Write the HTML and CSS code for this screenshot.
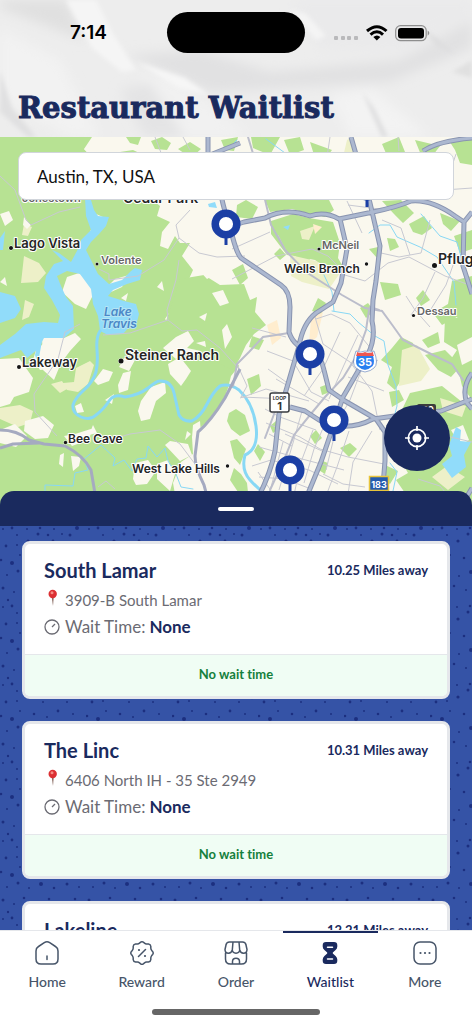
FILE: index.html
```html
<!DOCTYPE html>
<html lang="en">
<head>
    <meta charset="UTF-8">
    <meta name="viewport" content="width=device-width, initial-scale=1.0">
    <title>Restaurant Waitlist</title>
    <link rel="stylesheet" href="styles.css">
</head>
<body>
    <div class="app">
        <header class="header">
            <svg class="paper" viewBox="0 0 472 137" preserveAspectRatio="none" aria-hidden="true">
                <defs>
                    <filter id="soft" x="-20%" y="-20%" width="140%" height="140%"><feGaussianBlur stdDeviation="6"/></filter>
                    <filter id="crease" x="-20%" y="-20%" width="140%" height="140%"><feGaussianBlur stdDeviation="2"/></filter>
                </defs>
                <rect width="472" height="137" fill="#ededed"/>
                <g filter="url(#soft)">
                    <path d="M0 0H66L84 40L0 8Z" fill="#e0e0e0"/>
                    <path d="M125 55L200 50L270 72L400 60L472 20V48L390 82L210 92Z" fill="#e1e1e2"/>
                    <path d="M0 28L60 60L100 137H70L0 100Z" fill="#f2f2f2"/>
                    <path d="M140 70L180 82L250 137H150Z" fill="#f1f1f1"/>
                    <path d="M290 0H472V16L400 52L320 50Z" fill="#eaeaeb"/>
                    <path d="M330 95L372 88L430 137H350Z" fill="#f3f3f3"/>
                    <path d="M120 90L150 82L185 137H145Z" fill="#e4e4e5"/>
                </g>
                <g filter="url(#crease)">
                    <path d="M66 0H96L112 32L136 70L122 72L92 48Z" fill="#f5f5f5"/>
                    <path d="M290 10L306 14L326 36L316 40Z" fill="#f4f4f4"/>
                    <path d="M136 62L185 78L210 96L178 88Z" fill="#f6f6f6"/>
                    <path d="M425 30L440 40L455 54L436 46Z" fill="#dededf"/>
                    <path d="M0 70L12 108L36 137H28L0 112Z" fill="#e0e0e1"/>
                    <path d="M362 92L374 108L388 137H382Z" fill="#dededf"/>
                    <path d="M452 72L472 60V78Z" fill="#e0e0e0"/>
                </g>
            </svg>
            <div class="status">
                <span class="time">7:14</span>
                <span class="island"></span>
                <svg class="signals" viewBox="0 0 96 20" aria-hidden="true">
                    <g fill="#b9b9bb"><rect y="13" width="4" height="4" rx="1"/><rect x="7" y="13" width="4" height="4" rx="1"/><rect x="13" y="13" width="4" height="4" rx="1"/><rect x="20" y="13" width="4" height="4" rx="1"/></g>
                    <g fill="none" stroke="#000" stroke-width="3"><path d="M33 8Q43 -.6 52.500 8"/><path d="M36.500 11.600Q43 6 49 11.600"/></g>
                    <path d="M39.300 14Q43 11 46.400 14L42.800 17.500Z"/>
                    <rect x="61.700" y="2.700" width="30.500" height="15" rx="4.800" fill="none" stroke="#8e8e8e" stroke-width="1.200"/>
                    <rect x="64" y="5" width="26" height="10.500" rx="3"/>
                    <path d="M93.700 7.500Q97 10 93.700 12.800Z" fill="#8e8e8e"/>
                </svg>
            </div>
            <h1>Restaurant Waitlist</h1>
        </header>

        <section class="map">
            <svg class="map-canvas" viewBox="0 137 472 374" preserveAspectRatio="xMidYMin slice" role="img" aria-label="Map of Austin">
                <rect y="137" width="472" height="374" fill="#faf8ee"/>
                <!-- parks and hills -->
                <g fill="#b7e293">
                    <path d="M0 137H92L84 149L94 158L120 152L133 150L150 158L158 180L150 198L160 206L157 216L170 222L162 232L160 246L168 249L175 236L180 243L190 243L182 256L193 270L184 290L171 310L165 319L172 327L186 321L196 326L214 335L226 340L240 343L235 358L239 366L231 376L228 388L222 404L214 416L200 428L192 437L193 454L181 462L173 483L178 511H0Z"/>
                    <path d="M180 279L204 275L220 285L244 284L250 300L257 297L255 312L266 325L254 334L246 345L240 358L233 370L218 363L205 348L180 337L166 321Z"/>
                    <path d="M126 137H141L138 145L130 143ZM151 141L162 137L171 143L167 150L155 149ZM178 149L190 142L201 149L191 158ZM221 140L238 137L234 151L225 150ZM251 137H280L270 155L253 148ZM284 140L300 137L304 150L290 155ZM310 142L332 150L326 158H315ZM382 144L399 137L405 152L388 158ZM415 140L440 146L430 159L421 155ZM448 139H472V165L460 163L455 150Z"/>
                    <path d="M237 205L246 200L258 207L252 219L236 217ZM265 200H329L334 210L325 217L310 214L292 209L270 212ZM271 221L293 214L309 218L333 222L340 243L338 258L345 270L335 275L315 260L287 255L271 234Z"/>
                    <path d="M382 201L401 200L414 213L403 223L394 214ZM409 224L424 216L432 228L422 235L413 232ZM440 213L460 221L451 231L443 224ZM454 236L472 230V249L460 253ZM452 281L472 276V325L464 332L457 317L442 325L433 313L448 304Z"/>
                    <path d="M401 337L413 343L416 359L406 372L395 390L387 383L392 367L381 360L392 348ZM425 355L445 350L461 366L451 377L438 370ZM389 392L399 390L404 400L392 407ZM422 340L438 332L440 343L428 348ZM445 318H472V400L462 386L459 373L449 362L457 350L444 342Z"/>
                    <path d="M410 393L442 386L472 410V511H402L405 493L396 480L408 473L400 459L394 448L397 420ZM385 465L398 471L390 484L382 479Z"/>
                    <path d="M232 270L243 264L248 278L240 285ZM295 255L302 250L311 261L303 270ZM380 282L398 284L401 295L385 300ZM360 308L368 303L374 311L366 318ZM318 298L326 303L321 314L312 311ZM416 298L423 290L430 300L421 306ZM274 254L280 248L286 255L280 260ZM369 249L378 247L377 258ZM387 238L395 239L399 247L390 251Z"/>
                    <path d="M229 413L236 409L245 415L250 431L240 436L231 429L227 421ZM230 441L237 439L246 449L240 465L234 458ZM234 468L241 474L247 483L250 511H240L238 492L230 480ZM252 336L264 340L259 350L249 347ZM247 379L259 374L261 386L251 395ZM254 451L258 444L265 452L260 461ZM320 387L328 384L330 392L322 395ZM310 436L316 430L322 438L315 444ZM340 448L350 443L357 449L349 457ZM320 460L328 463L325 474L317 469ZM270 426L276 421L280 428L273 433Z"/>
                </g>
                <g fill="#edf0c8">
                    <path d="M24 224L32 227L28 236L22 235ZM24 256L39 263L46 273L38 282L21 283ZM25 300L34 304L29 317L22 320ZM63 383L74 382L76 368L90 361L94 365L88 384L78 392L67 390ZM51 384L62 381L67 389L60 393ZM0 408L20 405L33 411L30 423L18 427L0 419Z"/>
                    <path d="M290 255L316 261L340 273L329 289L302 282L291 276ZM402 350L417 345L430 369L421 381L399 386ZM440 398L466 406L462 417L443 411ZM300 231L315 226L309 240L302 239ZM347 140L352 137L354 157L343 157ZM447 466L465 477L448 490L432 477Z"/>
                </g>
                <g fill="#ffedce"><path d="M311 318L323 312L317 337L309 344ZM267 325L277 320L281 338L272 345ZM313 224L322 227L315 234Z"/></g>
                <!-- clearings -->
                <g fill="#faf8ee">
                    <path d="M84 149L94 147L100 155L110 148L119 153L108 160L91 157ZM0 214L9 211L13 220L5 226ZM23 225L24 217L31 225L27 229ZM90 232L94 222L98 228L94 233ZM96 214L103 217L104 223L98 222ZM62 292L67 277L79 273L90 282L93 295L86 309L75 304ZM108 286L115 279L129 275L122 287L111 292ZM0 282L5 277L7 286ZM157 287L162 281L164 291ZM121 298L128 293L126 301ZM32 363L36 350L50 338L62 340L63 355L52 369L40 370L32 358ZM0 359L19 358L33 378L29 392L14 397L10 404L0 407Z"/>
                    <path d="M42 335L54 329L64 338L75 333L81 339L70 351L61 363L54 380L43 370ZM94 381L103 369L113 372L109 381L98 385ZM118 385L123 373L131 371L128 390L119 393ZM119 367L124 358L135 360L129 371ZM141 401L151 387L165 382L166 393L156 401L150 419L141 421L138 411ZM168 364L180 357L191 371L186 379L181 386L170 374ZM176 337L188 331L194 341L187 348L201 351L195 356L185 352L176 359L163 348ZM222 330L227 324L232 337L225 349ZM196 343L205 341L206 347Z"/>
                    <path d="M0 430L15 424L27 436L16 447L0 443ZM25 421L43 416L54 425L48 438L35 439L24 431ZM64 436L75 434L94 428L88 440L72 446ZM89 435L93 425L97 433ZM71 456L81 457L79 466L73 471ZM60 455L64 453L63 467L59 464ZM133 479L135 463L148 460L156 471L147 484L136 485ZM165 445L170 441L188 444L192 455L180 461ZM185 440L187 431L191 434ZM157 464L168 460L175 474L170 491L157 479ZM193 425L200 421L201 434L192 438ZM75 406L81 403L84 412L77 413ZM105 400L114 394L112 404Z"/>
                    <path d="M197 268L211 265L216 274L207 279ZM457 345L472 337V360L462 365ZM451 430L463 425L469 440L460 446ZM199 317L207 313L205 321ZM212 293L223 290L229 303L220 306Z"/>
                </g>
                <!-- water -->
                <g fill="#91dcfa">
                    <path d="M85 198L91 200L94 210L98 216L109 217L106 226L99 234L91 242L86 250L92 262L98 274L109 284L122 280L131 271L135 268L142 270L140 280L127 284L113 290L108 296L124 301L136 304L139 314L137 322L129 327L123 334L108 335L100 331L98 316L93 304L91 289L80 274L67 271L57 276L61 286L66 297L73 306L74 329L64 338L44 338L38 349L27 358L21 350L0 358V345L15 334L26 324L44 322L58 323L60 315L52 300L44 288L46 276L54 264L63 261L52 250L59 253L71 262L78 249L81 240L91 230L86 216ZM0 292L15 296L21 309L15 318L0 323ZM0 238L5 231L3 250L0 250ZM208 204L215 202L217 208L209 207ZM283 227L290 225L288 230ZM449 445L456 427L461 430L460 441L471 442L464 455L466 467L452 478L442 464L452 456Z"/>
                    <path d="M38 342L42 341L38 363L35 355Z"/>
                </g>
                <g fill="none" stroke="#88d8f5" stroke-linecap="round" stroke-linejoin="round">
                    <path stroke-width="3" d="M100 331Q96 337 97 350T96 372Q93 382 84 390T73 405Q72 413 81 417T96 415Q104 409 109 401T125 397Q139 395 148 388T159 381Q171 380 174 393T179 415Q183 422 192 421Q201 416 207 404T220 386Q229 383 239 390Q253 403 256 426T245 455Q241 470 250 480T270 498"/>
                    <path stroke-width="1" d="M45 491V485L73 486L75 473L88 470L84 459L101 445L115 458L113 466L124 460L132 471L137 459L146 458L148 446L157 457L165 448L168 461L176 474L181 487L193 489M421 214L440 236L457 242L464 268M369 233L380 225L390 225L397 237L420 247L437 257L454 282L456 305M332 311L350 314L358 322L375 336L384 341L388 365L396 386L397 406L390 432M390 463L397 472L393 491M324 275L332 292L334 311M266 139L285 153M237 140L232 145"/>
                </g>
                <!-- streets -->
                <g fill="none" stroke="#c8c9d2" stroke-width="1">
                    <path d="M0 176L15 190L26 220L31 225L59 212L80 207M99 269L109 274V280L138 276L164 260L179 238L199 253L217 257L245 256M179 238L176 225L190 210M179 260L176 280L167 310L168 320L130 333L103 335M80 324L65 332L58 359L34 394L35 412L57 436M168 320L182 331L197 330L220 348L240 370M103 442L130 434L160 430L180 444L195 464M98 487L106 481L115 489M155 137L163 158M183 137L190 150"/>
                    <path d="M232 279L276 256L312 249L328 256L339 267M232 249L270 232M278 235L287 253M338 273L365 281L388 263L409 257L445 276L472 286M381 253L399 257L421 253L430 220M382 220L401 228L410 255M348 205L387 210M411 315L423 298L435 272M406 296L415 310L430 327M347 201L362 233M457 254L446 285L431 309M267 351L293 361L311 392L329 401M237 364L247 386L241 397L289 399M315 317L323 344L350 362L372 391L380 430M316 319L331 314L350 323L372 350M268 369L286 382M276 379L319 404M340 332L323 369L304 396M358 335L344 365L329 399M378 360L361 371L350 400L338 421L326 470M252 328L286 337M348 377L384 391"/>
                    <path d="M252 466L271 460L309 470L338 484M266 423L300 437L320 449L348 457L384 464M259 447L302 459L344 470M259 477L285 479L311 489M265 409L280 417L316 430M302 411L293 443L279 490M313 430L301 462L294 495M349 431L337 467L326 496M372 431L353 462L348 494M240 398L266 389L309 401M420 410L442 435L472 442M418 479L440 486L461 511M283 442L270 491M327 419L314 449L304 483M285 434L322 451M269 434L292 446M323 474L343 484L365 487M258 472L274 495M330 137L327 157M398 137L399 151M456 154L444 190L472 188"/>
                </g>
                <g fill="none" stroke="#bbbdcb" stroke-width="2" stroke-linecap="round">
                    <path d="M248 137L258 170L271 225L285 250L306 272L342 295L365 308L382 311L393 326L403 340L433 355L452 364L463 380M379 310L370 307M369 310L366 330L357 355L343 378L325 397L310 415L294 435L284 460L270 490M289 333L263 337L249 352L237 364L233 386M289 406L276 409L265 438"/>
                </g>
                <g fill="none" stroke="#a5aac0" stroke-width="3" stroke-linejoin="round">
                    <path d="M0 430Q17 430 29 440L44 444L65 446Q83 455 91 470L98 511M0 448L13 444L39 443M240 369L225 398Q211 421 198 432L195 456Q195 467 204 485L211 511"/>
                </g>
                <g fill="none" stroke="#8994b0" stroke-width="5" stroke-linejoin="round">
                    <path d="M208 137V160M221 195Q224 210 232 235Q237 254 241 258L281 285Q290 291 290 307L289 332Q294 348 312 351Q321 356 324 370L329 390L345 401L376 419L385 432V461L381 511M226 228L244 222L265 218Q285 207 310 216Q325 211 339 219L373 212Q397 207 411 201Q431 199 455 216L464 222L472 212M464 222L463 266L472 294M351 137L370 203L380 246L376 281L373 300L372 321Q376 338 368 354L343 397L334 424L321 462L307 496M340 219L347 249L341 283L333 302L316 313Q303 323 299 346L285 394L279 414L275 451Q271 472 258 498M472 399L441 411L402 415L373 419Q346 433 319 420L305 411L290 407M472 373Q461 388 467 403L472 409M205 157L240 143M423 151Q438 141 472 138M458 511L472 488"/>
                </g>
                <g fill="none" stroke="#acb8d0" stroke-width="3" stroke-linejoin="round">
                    <path d="M208 137V160M221 195Q224 210 232 235Q237 254 241 258L281 285Q290 291 290 307L289 332Q294 348 312 351Q321 356 324 370L329 390L345 401L376 419L385 432V461L381 511M226 228L244 222L265 218Q285 207 310 216Q325 211 339 219L373 212Q397 207 411 201Q431 199 455 216L464 222L472 212M464 222L463 266L472 294M351 137L370 203L380 246L376 281L373 300L372 321Q376 338 368 354L343 397L334 424L321 462L307 496M340 219L347 249L341 283L333 302L316 313Q303 323 299 346L285 394L279 414L275 451Q271 472 258 498M472 399L441 411L402 415L373 419Q346 433 319 420L305 411L290 407M472 373Q461 388 467 403L472 409M205 157L240 143M423 151Q438 141 472 138M458 511L472 488"/>
                </g>
                <!-- place names -->
                <g class="towns">
                    <text class="muted" x="22" y="202">Jonestown</text>
                    <text x="123" y="203" class="town-lg">Cedar Park</text>
                    <text x="14" y="248" class="town">Lago Vista</text>
                    <text class="muted" x="101" y="264">Volente</text>
                    <text class="water" x="104" y="316">Lake</text>
                    <text class="water" x="101" y="328">Travis</text>
                    <text x="22" y="367" class="town">Lakeway</text>
                    <text x="125" y="360" class="town-lg">Steiner Ranch</text>
                    <text x="68" y="443">Bee Cave</text>
                    <text x="132" y="473">West Lake Hills</text>
                    <text class="muted" x="322" y="249">McNeil</text>
                    <text x="284" y="273">Wells Branch</text>
                    <text x="438" y="264" class="town-lg">Pflugerville</text>
                    <text class="muted" x="417" y="315">Dessau</text>
                </g>
                <g fill="#151515" stroke="#fff" stroke-width="1" paint-order="stroke">
                    <circle cx="11" cy="248" r="2"/><circle cx="97" cy="264" r="1.500"/><circle cx="19" cy="367" r="2"/><circle cx="121" cy="361" r="2.500"/><circle cx="65.500" cy="442.500" r="1.700"/><circle cx="227.500" cy="466" r="1.700"/><circle cx="319" cy="249" r="1.600"/><circle cx="366.500" cy="264" r="1.700"/><circle cx="434.500" cy="265.500" r="2.500"/><circle cx="413.500" cy="315.500" r="1.600"/>
                </g>
                <!-- road shields -->
                <g class="shield">
                    <rect x="270" y="393" width="19" height="19" rx="2" fill="#fff" stroke="#393b40" stroke-width="1.500"/>
                    <text x="279.500" y="400" class="loop">LOOP</text>
                    <text x="279.500" y="410" fill="#333">1</text>
                    <path d="M357 352H373Q377 364 373 367Q370 370 365 371Q360 370 357 367Q353 364 357 352Z" fill="#287ff0" stroke="#fff" stroke-width="2"/>
                    <path d="M356 356Q357 354 357 352Q361 354 365 352Q369 354 373 352Q373 354 374 356Z" fill="#ed5651"/>
                    <path d="M356 351Q361 353 365 351Q369 353 374 351Q379 364 374 368Q371 371 365 372Q359 371 356 368Q351 364 356 351Z" fill="none" stroke="#5878b8" stroke-width=".6"/>
                    <text x="365" y="366" fill="#fff">35</text>
                    <rect x="369.500" y="476.500" width="19" height="14" fill="#245bae" stroke="#e8c43b" stroke-width="1.500"/>
                    <text x="379" y="487.500" fill="#fff" class="us">183</text>
                    <rect x="417" y="404" width="19" height="16" rx="2" fill="#3b3d3d"/>
                    <text x="426" y="413" fill="#fff" class="us">130</text>
                </g>
                <!-- restaurants -->
                <defs>
                    <g id="pin"><path d="M-1.500 8H1.500V21H-1.500Z" fill="#1b3fa5"/><circle r="10.800" fill="#fff" stroke="#1b3fa5" stroke-width="7.500"/></g>
                </defs>
                <use href="#pin" x="367" y="186"/>
                <use href="#pin" x="226" y="224"/>
                <use href="#pin" x="310" y="354"/>
                <use href="#pin" x="334" y="420"/>
                <use href="#pin" x="290" y="470"/>
            </svg>
            <input class="search" type="text" value="Austin, TX, USA" aria-label="Search location">
            <button class="locate" type="button" aria-label="Use my location">
                <svg viewBox="0 0 24 24" aria-hidden="true"><g fill="none" stroke="#fff" stroke-width="1.700"><circle cx="12" cy="12" r="8.700"/><path d="M12 0V5M12 19V24M0 12H5M19 12H24"/></g><circle cx="12" cy="12" r="4.500" fill="#fff"/></svg>
            </button>
        </section>

        <main class="sheet">
            <div class="sheet-head"><span class="handle"></span></div>
            <div class="list">
                <article class="card">
                    <div class="card-body">
                        <div class="card-top"><h2>South Lamar</h2><span class="distance">10.25 Miles away</span></div>
                        <p class="address"><svg viewBox="0 0 16 18" aria-hidden="true"><path d="M7.600 7H9.800L9 17Z" fill="#87685f"/><circle cx="8.700" cy="5" r="4.200" fill="#dc3033"/><circle cx="8" cy="3.800" r="1.500" fill="#f58b82"/></svg>3909-B South Lamar</p>
                        <p class="wait"><svg viewBox="0 0 16 16" aria-hidden="true"><circle cx="8" cy="8" r="7"/><path d="M8 8L11 5"/></svg>Wait Time: <strong>None</strong></p>
                    </div>
                    <div class="card-status">No wait time</div>
                </article>
                <article class="card">
                    <div class="card-body">
                        <div class="card-top"><h2>The Linc</h2><span class="distance">10.31 Miles away</span></div>
                        <p class="address"><svg viewBox="0 0 16 18" aria-hidden="true"><path d="M7.600 7H9.800L9 17Z" fill="#87685f"/><circle cx="8.700" cy="5" r="4.200" fill="#dc3033"/><circle cx="8" cy="3.800" r="1.500" fill="#f58b82"/></svg>6406 North IH - 35 Ste 2949</p>
                        <p class="wait"><svg viewBox="0 0 16 16" aria-hidden="true"><circle cx="8" cy="8" r="7"/><path d="M8 8L11 5"/></svg>Wait Time: <strong>None</strong></p>
                    </div>
                    <div class="card-status">No wait time</div>
                </article>
                <article class="card">
                    <div class="card-body">
                        <div class="card-top"><h2>Lakeline</h2><span class="distance">12.21 Miles away</span></div>
                    </div>
                </article>
            </div>
        </main>

        <nav class="tabs">
            <a href="#home"><svg viewBox="0 0 24 24" aria-hidden="true"><path d="M1 10Q1 7 3.500 5.500L9.300 1.700Q12 0 14.700 1.700L20.500 5.500Q23 7 23 10V18Q23 23 18 23H6Q1 23 1 18ZM12 15V18.500"/></svg>Home</a>
            <a href="#reward"><svg viewBox="0 0 24 24" aria-hidden="true"><path d="M9.500 2.200L10.700 1.200Q12 .3 13.300 1.200L14.500 2.200Q15.500 3 16.800 2.900H18.500Q20.600 3.200 20.800 5.200V6.900Q20.800 8.200 21.700 9.400L22.700 10.600Q23.700 12 22.700 13.400L21.700 14.600Q20.800 15.800 20.800 17.100V18.800Q20.600 20.800 18.500 21.100H16.800Q15.500 21 14.500 21.800L13.300 22.800Q12 23.700 10.700 22.800L9.500 21.800Q8.500 21 7.200 21.100H5.500Q3.400 20.800 3.200 18.800V17.100Q3.200 15.800 2.300 14.600L1.300 13.400Q.3 12 1.300 10.600L2.300 9.400Q3.200 8.200 3.200 6.900V5.200Q3.400 3.200 5.500 2.900H7.200Q8.500 3 9.500 2.200ZM8.500 15.500L15.500 8.500"/><path class="dots" d="M9 9H9.010M15 15H15.010"/></svg>Reward</a>
            <a href="#order"><svg viewBox="0 0 24 24" aria-hidden="true"><path d="M1.500 12V18Q1.500 23 6.500 23H17.500Q22.500 23 22.500 18V12M5.500 1H18.500Q21.500 1 22 4L23 8.500Q23 12 19.500 12.300Q16.500 12 15.700 9Q15.500 12 12 12.300Q8.500 12 8.300 9Q7.500 12 4.500 12.300Q1 12 1 8.500L2 4Q2.500 1 5.500 1ZM8.300 9L9 1M15.700 9L15 1M8.500 23V20.500Q8.500 17.200 12 17.200T15.500 20.500V23"/></svg>Order</a>
            <a class="active" href="#waitlist" aria-current="page"><svg viewBox="0 0 24 24" aria-hidden="true"><path class="solid" d="M8 1H16Q19.300 1 19.300 4.300V5.500Q19.300 7.500 17.600 9L14.800 11.500V12.500L17.600 15Q19.300 16.500 19.300 18.500V19.700Q19.300 23 16 23H8Q4.700 23 4.700 19.700V18.500Q4.700 16.500 6.400 15L9.200 12.500V11.500L6.400 9Q4.700 7.500 4.700 5.500V4.300Q4.700 1 8 1Z"/><path class="cut" d="M9.500 6.300H14.500M9.500 18H14.500"/></svg>Waitlist</a>
            <a href="#more"><svg viewBox="0 0 24 24" aria-hidden="true"><rect x="1" y="1" width="22" height="22" rx="6"/><path class="dots" d="M7.500 12H7.510M12 12H12.010M16.500 12H16.510"/></svg>More</a>
            <span class="home-bar"></span>
        </nav>
    </div>
</body>
</html>
```
FILE: styles.css
```css
* {
    box-sizing: border-box;
}
body {
    margin: 0;
    font-family: Lato, "Open Sans", sans-serif;
    font-variant-ligatures: none;
    color: #1a2a5e;
}
h1, h2, p {
    margin: 0;
}
.app {
    display: flex;
    flex-direction: column;
    height: 100vh;
    overflow: hidden;
    background: #3452a5;
}

/* header */
.header {
    position: relative;
    padding: 12px 18px 12px;
}
.paper {
    position: absolute;
    inset: 0;
    width: 100%;
    height: 100%;
}
.status {
    position: relative;
    display: grid;
    grid-template-columns: 1fr 138px 1fr;
    align-items: center;
    justify-items: center;
}
.time {
    padding-right: 8px;
    font: 600 19px Inter, sans-serif;
    color: #000;
}
.island {
    width: 138px;
    height: 41px;
    border-radius: 21px;
    background: #000;
}
.signals {
    width: 100px;
    height: 20px;
    padding-left: 4px;
}
h1 {
    position: relative;
    margin-top: 38px;
    font: 900 29px/34px "DejaVu Serif", serif;
    color: #1a2a5e;
    -webkit-text-stroke: 1px #1a2a5e;
    white-space: nowrap;
}

/* map */
.map {
    position: relative;
    flex: none;
    height: 374px;
    padding: 15px 18px;
    overflow: hidden;
}
.map-canvas {
    position: absolute;
    inset: 0;
    width: 100%;
    height: 100%;
}
.towns {
    font: 600 12px Inter, sans-serif;
    fill: #252525;
    stroke: #fff;
    stroke-width: 2px;
    stroke-linejoin: round;
    paint-order: stroke;
}
.towns .town {
    font-size: 13px;
}
.towns .town-lg {
    font-size: 14px;
}
.towns .muted {
    font-size: 11px;
    fill: #666;
}
.towns .water {
    font-size: 12px;
    font-style: italic;
    fill: #4b88c7;
    stroke: #b5e5f5;
}
.shield {
    font: 700 11px Inter, sans-serif;
    text-anchor: middle;
}
.shield .us {
    font-size: 9px;
}
.shield .loop {
    font-size: 5px;
    fill: #333;
}
.search {
    position: relative;
    display: block;
    width: 100%;
    height: 48px;
    padding: 0 18px;
    border: 1px solid #d1d5db;
    border-radius: 8px;
    background: #fff;
    font: 400 17px Lato, sans-serif;
    color: #111;
}
.locate {
    position: absolute;
    right: 22px;
    bottom: 40px;
    display: grid;
    place-items: center;
    width: 66px;
    height: 66px;
    padding: 0;
    border: 0;
    border-radius: 50%;
    background: #1a2a5e;
}
.locate svg {
    width: 24px;
    height: 24px;
}

/* bottom sheet */
.sheet {
    position: relative;
    display: flex;
    flex: 1;
    flex-direction: column;
    min-height: 0;
    margin-top: -20px;
}
.sheet-head {
    display: grid;
    flex: none;
    place-items: center;
    height: 35px;
    border-radius: 14px 14px 0 0;
    background: #1a2a5e;
}
.handle {
    width: 36px;
    height: 4px;
    border-radius: 2px;
    background: #fff;
}
.list {
    display: flex;
    flex: 1;
    flex-direction: column;
    gap: 22px;
    min-height: 0;
    padding: 15px 22px;
    overflow-y: auto;
    scrollbar-width: none;
    background: #3553a6 url("data:image/svg+xml,%3Csvg xmlns='http://www.w3.org/2000/svg' width='86' height='78'%3E%3Cg fill='%231c2f80'%3E%3Ccircle cx='3' cy='3' r='1'/%3E%3Ccircle cx='12' cy='2' r='1.4'/%3E%3Ccircle cx='27' cy='3' r='1'/%3E%3Ccircle cx='40' cy='2' r='1.3'/%3E%3Ccircle cx='54' cy='3' r='1'/%3E%3Ccircle cx='77' cy='2' r='2'/%3E%3Ccircle cx='17' cy='9' r='1'/%3E%3Ccircle cx='38' cy='8' r='1.5'/%3E%3Ccircle cx='48' cy='9' r='1.3'/%3E%3Ccircle cx='62' cy='8' r='1'/%3E%3Ccircle cx='70' cy='9' r='1.5'/%3E%3Ccircle cx='6' cy='20' r='1.4'/%3E%3Ccircle cx='17' cy='19' r='1'/%3E%3Ccircle cx='28' cy='15' r='1.6'/%3E%3Ccircle cx='43' cy='20' r='1'/%3E%3Ccircle cx='53' cy='15' r='1.4'/%3E%3Ccircle cx='67' cy='20' r='1'/%3E%3Ccircle cx='80' cy='16' r='1.2'/%3E%3Ccircle cx='1' cy='34' r='1.3'/%3E%3Ccircle cx='12' cy='37' r='2'/%3E%3Ccircle cx='20' cy='29' r='1'/%3E%3Ccircle cx='34' cy='32' r='1.3'/%3E%3Ccircle cx='47' cy='35' r='1'/%3E%3Ccircle cx='58' cy='29' r='1.4'/%3E%3Ccircle cx='73' cy='32' r='1'/%3E%3Ccircle cx='7' cy='49' r='1'/%3E%3Ccircle cx='18' cy='45' r='1.5'/%3E%3Ccircle cx='29' cy='50' r='1'/%3E%3Ccircle cx='41' cy='46' r='2'/%3E%3Ccircle cx='54' cy='50' r='1.3'/%3E%3Ccircle cx='67' cy='46' r='1.5'/%3E%3Ccircle cx='79' cy='49' r='1'/%3E%3Ccircle cx='3' cy='62' r='1.5'/%3E%3Ccircle cx='14' cy='66' r='1'/%3E%3Ccircle cx='24' cy='60' r='1.3'/%3E%3Ccircle cx='36' cy='64' r='1'/%3E%3Ccircle cx='49' cy='61' r='1.3'/%3E%3Ccircle cx='61' cy='66' r='1.7'/%3E%3Ccircle cx='75' cy='61' r='1.3'/%3E%3Ccircle cx='8' cy='74' r='1.2'/%3E%3Ccircle cx='44' cy='75' r='1'/%3E%3Ccircle cx='69' cy='74' r='1.4'/%3E%3C/g%3E%3C/svg%3E");
}
.card {
    flex: none;
    border: 3px solid #e5e7eb;
    border-radius: 8px;
    background: #fff;
    overflow: hidden;
}
.card-body {
    padding: 12px 19px 14px;
}
.card-top {
    display: flex;
    align-items: center;
    justify-content: space-between;
}
h2 {
    font-size: 20px;
    font-weight: 700;
    line-height: 28px;
}
.distance {
    font-size: 13px;
    font-weight: 700;
}
.address,
.wait {
    display: flex;
    align-items: center;
    color: #6b6b73;
}
.address {
    margin-top: 4px;
    font-size: 15px;
    line-height: 24px;
}
.wait {
    margin-top: 2px;
    font-size: 17px;
    line-height: 26px;
}
.wait strong {
    margin-left: 4px;
    color: #1a2a5e;
}
.address svg,
.wait svg {
    width: 16px;
    height: 18px;
    margin-right: 5px;
}
.address svg {
    margin-bottom: 4px;
}
.wait svg {
    fill: none;
    stroke: #6b6b73;
    stroke-width: 1.3;
}
.card-status {
    padding-bottom: 2px;
    border-top: 1px solid #e5e7eb;
    background: #f0fdf4;
    font-size: 13px;
    font-weight: 700;
    line-height: 39px;
    text-align: center;
    color: #15803d;
}

/* tab bar */
.tabs {
    position: relative;
    display: grid;
    flex: none;
    grid-template-columns: repeat(5, 1fr);
    height: 94px;
    border-top: 1px solid #e5e7eb;
    background: #fff;
}
.tabs a {
    display: flex;
    flex-direction: column;
    align-items: center;
    gap: 7px;
    height: 70px;
    padding-top: 10px;
    font-size: 14px;
    font-weight: 500;
    line-height: 20px;
    color: #475569;
    text-decoration: none;
}
.tabs a.active {
    border-top: 2px solid #1a2a5e;
    padding-top: 8px;
    color: #1a2a5e;
}
.tabs svg {
    width: 24px;
    height: 24px;
    fill: none;
    stroke: currentColor;
    stroke-width: 1.5;
    stroke-linecap: round;
    stroke-linejoin: round;
}
.tabs .dots {
    stroke-width: 2.2;
}
.tabs .solid {
    fill: currentColor;
    stroke: none;
}
.tabs .cut {
    stroke: #fff;
}
.home-bar {
    position: absolute;
    bottom: 9px;
    left: 50%;
    width: 168px;
    height: 6px;
    border-radius: 3px;
    background: #666;
    transform: translateX(-50%);
}
```
